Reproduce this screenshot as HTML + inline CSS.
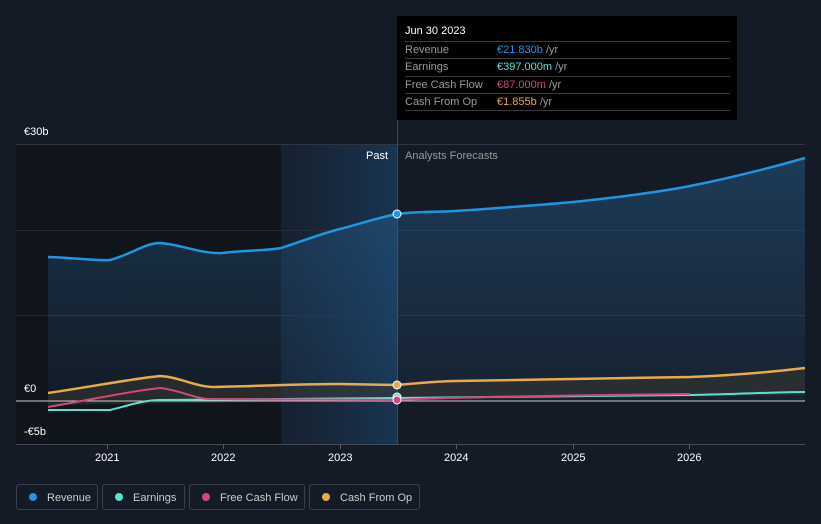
<!DOCTYPE html>
<html><head><meta charset="utf-8"><style>
body{margin:0;width:821px;height:524px;background:#151b26;font-family:"Liberation Sans",sans-serif;overflow:hidden;position:relative}
.t{position:absolute;font-size:11px;color:#fff}
.tip{position:absolute;left:397px;top:16px;width:340px;height:104px;background:#000}
.tip .h{position:absolute;left:8px;top:9px;color:#fff;font-size:11px}
.row{position:absolute;left:8px;width:325px;border-top:1px solid #3a3a3a;height:17px;font-size:11px;line-height:17px;color:#999}
.row span{position:absolute;left:92px}
.leg{position:absolute;top:484px;height:26px;border:1px solid #3a404b;border-radius:3px;font-size:11px;color:#ccc;line-height:26px;box-sizing:border-box}
.leg i{display:inline-block;width:8px;height:8px;border-radius:50%;margin:0 10px 0 12px;vertical-align:-0px}
</style></head><body>
<svg width="821" height="524" style="position:absolute;left:0;top:0">
<defs><linearGradient id="hl" x1="0" x2="1"><stop offset="0" stop-color="#1a3350" stop-opacity="0.25"/><stop offset="1" stop-color="#1a3d60" stop-opacity="0.75"/></linearGradient>
<linearGradient id="rv" x1="0" y1="0" x2="0" y2="1"><stop offset="0" stop-color="#2a6fa8" stop-opacity="0.38"/><stop offset="1" stop-color="#2a6fa8" stop-opacity="0.08"/></linearGradient></defs>
<rect x="16" y="144" width="265" height="300" fill="#10141b"/>
<rect x="281" y="144" width="116" height="300" fill="url(#hl)"/>
<g stroke="#262d39" stroke-width="1"><line x1="16" y1="144.5" x2="805" y2="144.5" stroke="#2f3642"/><line x1="16" y1="230.5" x2="805" y2="230.5"/><line x1="16" y1="315.5" x2="805" y2="315.5"/><line x1="16" y1="444.5" x2="805" y2="444.5" stroke="#444b57"/></g>
<line x1="397.5" y1="120" x2="397.5" y2="444" stroke="#3a4a5c"/>
<path d="M48 257 C80 258 95 261 110 260 C130 255 145 243 160 243 C180 244 200 254 222 253 C245 250 265 251 281 248 C300 242 320 234 340 229 C360 224 380 217 397 214 C420 211 440 212 455 211 C500 208 540 205 573 202 C620 197 660 192 690 186 C730 178 770 168 805 158 L805 401 L48 401Z" fill="url(#rv)"/>
<path d="M48 257 C80 258 95 261 110 260 C130 255 145 243 160 243 C180 244 200 254 222 253 C245 250 265 251 281 248 C300 242 320 234 340 229 C360 224 380 217 397 214 C420 211 440 212 455 211 C500 208 540 205 573 202 C620 197 660 192 690 186 C730 178 770 168 805 158" fill="none" stroke="#2394df" stroke-width="2.5"/>
<path d="M48 393 C90 387 130 379 160 376 C180 377 195 387 215 387 C260 386 300 384 340 384 L397 385 C420 383 440 381 455 381 C560 379 640 378 690 377 C740 375 780 371 805 368 L805 395 L48 405Z" fill="#3a3a30" opacity="0.5"/>
<line x1="16" y1="401" x2="805" y2="401" stroke="#ccc" stroke-width="1"/>
<path d="M48 410 L110 410 C130 405 145 400 160 400 L397 398 C500 397 650 395 690 395 C740 394 780 392 805 392" fill="none" stroke="#5ee0cf" stroke-width="2"/>
<path d="M48 407 C90 400 130 391 160 388 C180 390 195 399 210 399 L397 400 C450 397 600 395 690 394" fill="none" stroke="#d1487f" stroke-width="2"/>
<path d="M48 393 C90 387 130 379 160 376 C180 377 195 387 215 387 C260 386 300 384 340 384 L397 385 C420 383 440 381 455 381 C560 379 640 378 690 377 C740 375 780 371 805 368" fill="none" stroke="#e8a94f" stroke-width="2.5"/>
<circle cx="397" cy="214" r="4" fill="#2394df" stroke="#fff" stroke-width="1"/>
<circle cx="397" cy="385" r="4" fill="#e8a94f" stroke="#fff" stroke-width="1"/>
<circle cx="397" cy="397" r="4" fill="#5ee0cf" stroke="#fff" stroke-width="1"/>
<circle cx="397" cy="400" r="4" fill="#d1487f" stroke="#fff" stroke-width="1"/>
<g stroke="#555c66"><line x1="107.5" y1="444" x2="107.5" y2="449"/><line x1="223.5" y1="444" x2="223.5" y2="449"/><line x1="340.5" y1="444" x2="340.5" y2="449"/><line x1="456.5" y1="444" x2="456.5" y2="449"/><line x1="573.5" y1="444" x2="573.5" y2="449"/><line x1="689.5" y1="444" x2="689.5" y2="449"/></g>
</svg>
<div class="t" style="left:24px;top:126px">€30b</div>
<div class="t" style="left:24px;top:383px">€0</div>
<div class="t" style="left:24px;top:426px">-€5b</div>
<div class="t" style="left:366px;top:150px">Past</div>
<div class="t" style="left:405px;top:150px;color:#999">Analysts Forecasts</div>
<div class="t" style="left:95px;top:452px">2021</div><div class="t" style="left:211px;top:452px">2022</div><div class="t" style="left:328px;top:452px">2023</div><div class="t" style="left:444px;top:452px">2024</div><div class="t" style="left:561px;top:452px">2025</div><div class="t" style="left:677px;top:452px">2026</div>
<div class="tip"><div class="h">Jun 30 2023</div>
<div class="row" style="top:25px">Revenue<span style="color:#2394df">€21.830b <b style="font-weight:normal;color:#999">/yr</b></span></div>
<div class="row" style="top:42px">Earnings<span style="color:#5ee0cf">€397.000m <b style="font-weight:normal;color:#999">/yr</b></span></div>
<div class="row" style="top:60px">Free Cash Flow<span style="color:#d1487f">€87.000m <b style="font-weight:normal;color:#999">/yr</b></span></div>
<div class="row" style="top:77px">Cash From Op<span style="color:#e8a94f">€1.855b <b style="font-weight:normal;color:#999">/yr</b></span></div>
<div class="row" style="top:94px;height:0"></div>
</div>
<div class="leg" style="left:16px;width:82px"><i style="background:#2394df"></i>Revenue</div>
<div class="leg" style="left:102px;width:83px"><i style="background:#5ee0cf"></i>Earnings</div>
<div class="leg" style="left:189px;width:116px"><i style="background:#d1487f"></i>Free Cash Flow</div>
<div class="leg" style="left:309px;width:111px"><i style="background:#e8a94f"></i>Cash From Op</div>
</body></html>
